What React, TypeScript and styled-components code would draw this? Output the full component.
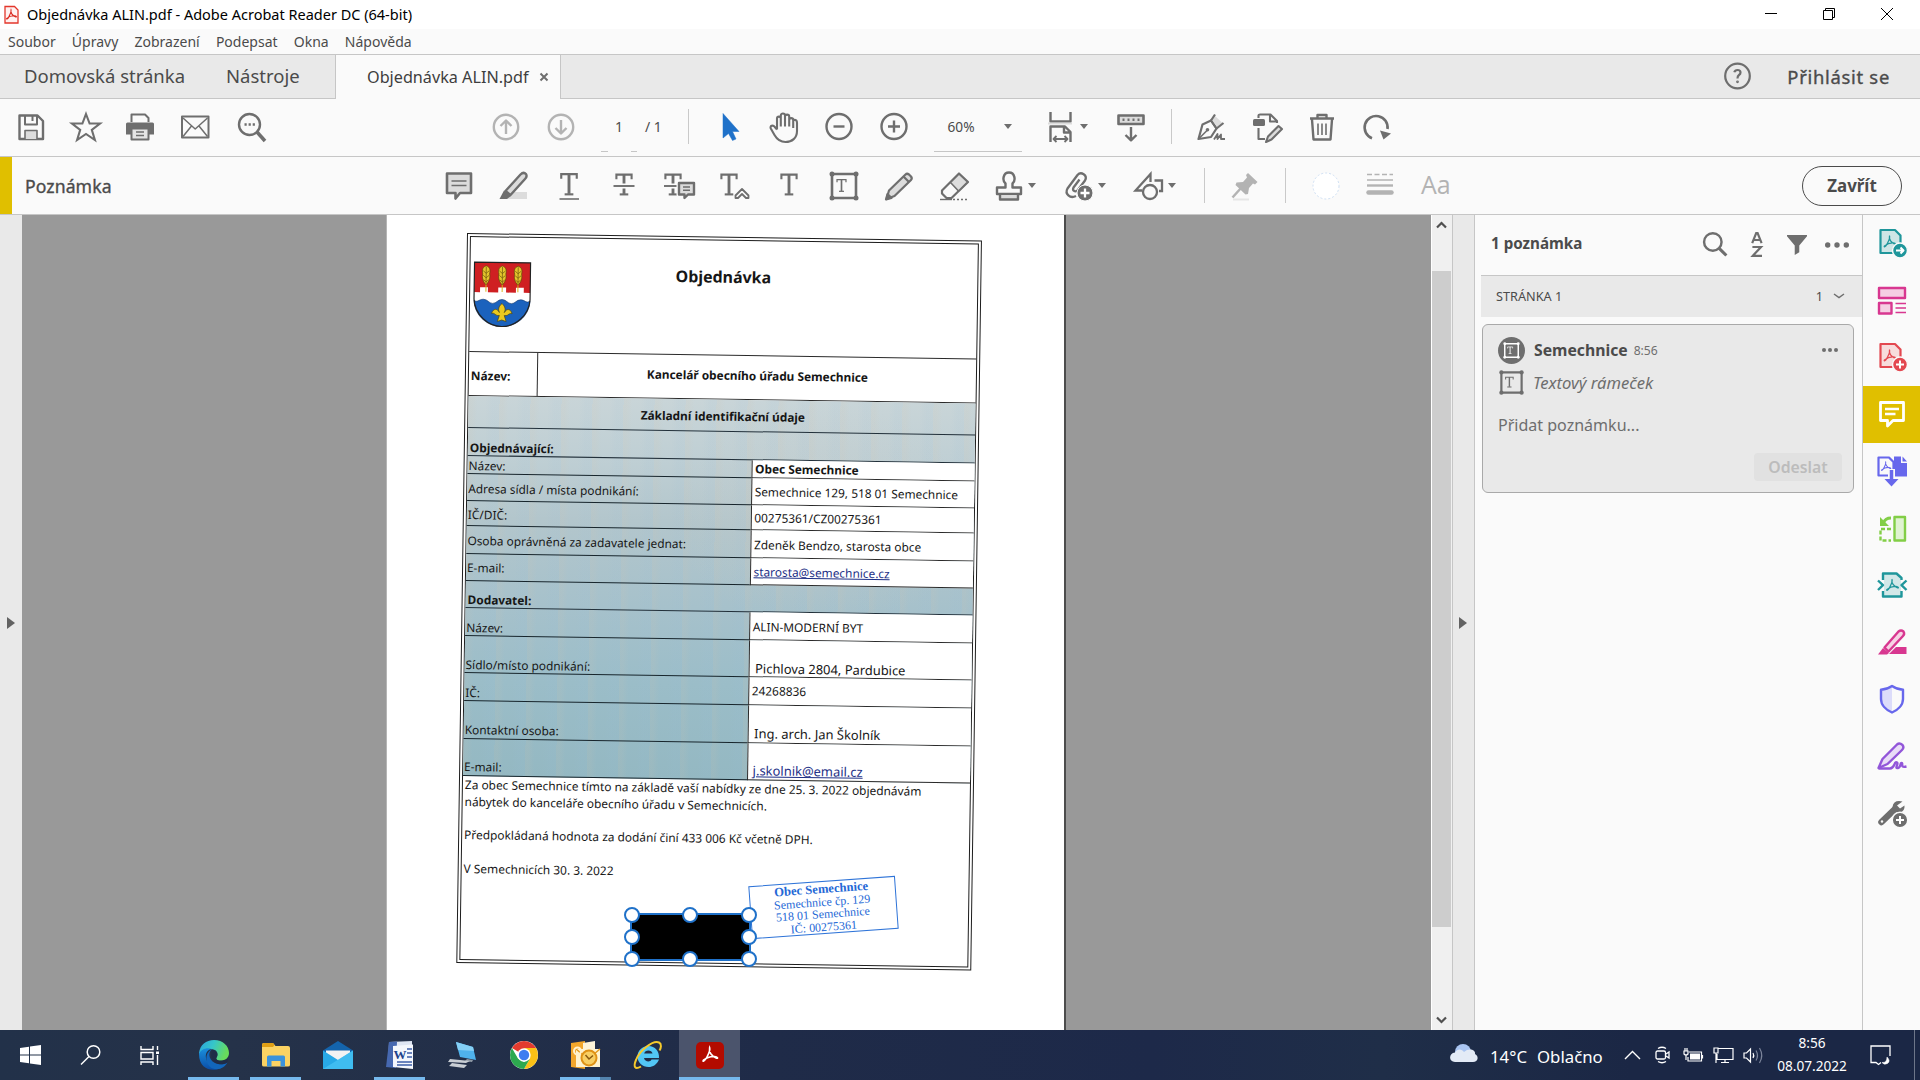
import React from "react";
import styled, { createGlobalStyle } from "styled-components";

const ui = `"Noto Sans", "Open Sans", sans-serif`;
const ink = "#6e6e6e";
const soft = "#b3b3b3";

const GlobalStyle = createGlobalStyle`
  * { box-sizing: border-box; }
  body { margin: 0; background: #fafafa; font-family: ${ui}; overflow: hidden; }
  svg { display: block; flex: none; overflow: visible; }
`;

const Window = styled.div`
  width: 1920px;
  height: 1080px;
  display: flex;
  flex-direction: column;
  background: #fafafa;
  white-space: nowrap;
  color: #4b4b4b;
`;

/* ---------- title, menu and tabs ---------- */

const TitleBar = styled.header`
  height: 29px;
  flex: none;
  display: flex;
  align-items: center;
  background: #fff;
  padding: 0 4px 1px;
`;
const WindowTitle = styled.span`
  margin-left: 8px;
  flex: 1;
  font-size: 14.5px;
  line-height: 27px;
  color: #000;
`;
const WindowButton = styled.span`
  width: 58px;
  display: flex;
  justify-content: center;
`;

const MenuBar = styled.nav`
  height: 26px;
  flex: none;
  display: flex;
  align-items: center;
  gap: 16.2px;
  padding: 0 8px 1px;
  border-bottom: 1px solid #c6c6c6;
  font-size: 14px;
`;

const TabBar = styled.div`
  height: 44px;
  flex: none;
  display: flex;
  align-items: stretch;
  background: #e9e9e9;
  border-bottom: 1px solid #c6c6c6;
`;
const HomeTabs = styled.div`
  width: 335px;
  display: flex;
  align-items: center;
  gap: 41px;
  padding: 0 0 2px 24px;
  font-size: 18.5px;
`;
const ActiveTab = styled.div`
  width: 226px;
  height: 44px;
  display: flex;
  align-items: center;
  gap: 11px;
  padding: 0 0 1px 31px;
  background: #fafafa;
  border: solid #c6c6c6;
  border-width: 0 1px;
  font-size: 16.2px;
  color: #3e3e3e;
`;
const SignIn = styled.div`
  margin-left: auto;
  display: flex;
  align-items: center;
  gap: 36px;
  padding-right: 30px;
  font-size: 18.4px;
  letter-spacing: 0.72px;
  -webkit-text-stroke: 0.35px;
`;

/* ---------- toolbars ---------- */

const Toolbar = styled.div<{ $lift?: number }>`
  height: 58px;
  flex: none;
  display: flex;
  align-items: center;
  padding-bottom: ${(p) => p.$lift ?? 0}px;
  border-bottom: 1px solid #c6c6c6;
`;
const Cell = styled.div<{ $w?: number }>`
  width: ${(p) => p.$w ?? 55}px;
  flex: none;
  display: flex;
  align-items: center;
  justify-content: center;
`;
const Gap = styled.div<{ $w: number }>`
  width: ${(p) => p.$w}px;
  flex: none;
`;
const Divider = styled.div`
  width: 1px;
  height: 35px;
  flex: none;
  background: #c9c9c9;
`;
const PageField = styled.div`
  width: 36px;
  height: 50px;
  display: flex;
  align-items: center;
  justify-content: center;
  font-size: 14px;
  background: linear-gradient(90deg, #c6c6c6 7px, transparent 7px 30px, #c6c6c6 30px) 0 100% / 100% 1px no-repeat;
`;
const PageTotal = styled.span`
  width: 24px;
  margin-left: 8px;
  font-size: 14px;
`;
const ZoomField = styled.div`
  width: 88px;
  height: 50px;
  display: flex;
  align-items: center;
  justify-content: space-between;
  padding: 0 10px 0 14px;
  border-bottom: 1px solid #c6c6c6;
  font-size: 13.7px;
`;
const Caret = styled.i`
  border: 4.5px solid transparent;
  border-top: 5px solid ${ink};
  border-bottom: 0;
  flex: none;
`;
const ToolTitle = styled.div`
  width: 431.5px;
  height: 57px;
  flex: none;
  display: flex;
  align-items: center;
  padding-left: 13px;
  border-left: 12px solid #e0bf00;
  font-size: 17.6px;
  letter-spacing: 0.1px;
  -webkit-text-stroke: 0.35px;
`;
const FontTool = styled.span`
  width: 40px;
  font-family: "Open Sans", sans-serif;
  font-size: 25px;
  line-height: 36px;
  padding-bottom: 3px;
  color: ${soft};
`;
const CloseButton = styled.button`
  width: 100px;
  height: 40px;
  margin: 0 18px 0 auto;
  border: 1.5px solid #4b4b4b;
  border-radius: 20px;
  background: none;
  font: 700 16.9px ${ui};
  color: #4b4b4b;
`;

/* ---------- workspace ---------- */

const Workspace = styled.main`
  flex: 1;
  min-height: 0;
  display: flex;
  overflow: hidden;
`;
const SideHandle = styled.div<{ $dir?: "right" }>`
  width: ${(p) => (p.$dir ? 23 : 22)}px;
  flex: none;
  display: flex;
  align-items: center;
  padding-left: ${(p) => (p.$dir ? 6 : 7)}px;
  background: #e9e9e9;
  border-right: ${(p) => (p.$dir ? "1px solid #c6c6c6" : "0")};
  border-left: ${(p) => (p.$dir ? "1px solid #c6c6c6" : "0")};
`;
const HandleArrow = styled.i`
  border: 6px solid transparent;
  border-left: 8px solid #626262;
  border-right: 0;
`;
const Canvas = styled.div`
  width: 1410px;
  flex: none;
  padding-left: 364px;
  background: #999;
  border-right: 1px solid #fff;
  overflow: hidden;
`;
const Page = styled.article`
  position: relative;
  width: 680px;
  height: 960px;
  padding: 18px 0 0 79.5px;
  background: #fff;
  border-left: 1px solid #b5b5b5;
  border-right: 2px solid #4c4c4c;
`;
const Scrollbar = styled.div`
  width: 20px;
  flex: none;
  display: flex;
  flex-direction: column;
  align-items: center;
  justify-content: space-between;
  padding: 6px 1px 6px 0;
  background: #f0f0f0;
`;
const Thumb = styled.div`
  width: 19px;
  height: 656px;
  margin: 42px 0 auto;
  background: #cdcdcd;
`;

/* ---------- scanned order form ---------- */

const Form = styled.section`
  width: 515px;
  height: 730px;
  display: flex;
  flex-direction: column;
  border: 4px double #1d1d1d;
  transform: rotate(0.84deg);
  transform-origin: 0 0;
  font-size: 11.87px;
  line-height: 16px;
  color: #161616;
`;
const FormHead = styled.div`
  height: 115px;
  flex: none;
  display: grid;
  grid-template-columns: 66px 1fr 66px;
  padding: 24px 2px 0 3px;
  border-bottom: 1px solid #2a2a2a;
`;
const FormTitle = styled.h1`
  margin: 1px 2px 0 0;
  text-align: center;
  font-size: 15.95px;
  line-height: 22px;
`;
const NameRow = styled.div`
  height: 44px;
  flex: none;
  display: grid;
  grid-template-columns: 68px 1fr;
  border-bottom: 1px solid #2a2a2a;
  font-weight: 700;
`;
const NameCell = styled.div<{ $center?: boolean }>`
  display: flex;
  align-items: center;
  justify-content: ${(p) => (p.$center ? "center" : "flex-start")};
  padding: ${(p) => (p.$center ? "0 0 5px 1px" : "2px 0 0 2px")};
  border-left: ${(p) => (p.$center ? "1px solid #2a2a2a" : "0")};
`;
const Tinted = styled.div`
  flex: none;
  background:
    repeating-linear-gradient(90deg, rgba(214, 196, 170, 0.1) 0 3px, rgba(255, 255, 255, 0) 9px 17px, rgba(150, 190, 220, 0.08) 24px 31px),
    radial-gradient(ellipse at 70% 30%, rgba(210, 205, 195, 0.3), transparent 30%),
    linear-gradient(#c9d5d8 0, #bfcfd4 16%, #b3c6cc 32%, #a6c1cb 55%, #9bbdc8 75%, #94b8c2);
`;
const Band = styled.div<{ $h: number; $center?: boolean }>`
  height: ${(p) => p.$h}px;
  display: flex;
  align-items: ${(p) => (p.$center ? "center" : "flex-end")};
  justify-content: ${(p) => (p.$center ? "center" : "flex-start")};
  padding-left: 2px;
  border-bottom: 1px solid #22303a;
  font-weight: 700;
`;
const FormRow = styled.div<{ $h: number }>`
  height: ${(p) => p.$h}px;
  display: grid;
  grid-template-columns: 283.5px 1fr;
`;
const Label = styled.div<{ $lift: number }>`
  display: flex;
  align-items: flex-end;
  padding-left: 1px;
  border-bottom: 1px solid #17252c;
  > span { margin-bottom: ${(p) => p.$lift}px; }
`;
const Value = styled.div<{ $lift: number; $size?: number; $bold?: boolean; $indent?: number }>`
  display: flex;
  align-items: flex-end;
  padding-left: ${(p) => p.$indent ?? 3}px;
  background: #fff;
  border-left: 1px solid #2a2a2a;
  border-bottom: 1px solid #2a2a2a;
  font-size: ${(p) => p.$size ?? 11.87}px;
  font-weight: ${(p) => (p.$bold ? 700 : 400)};
  > * { margin-bottom: ${(p) => p.$lift}px; }
`;
const Mail = styled.a`
  color: #1d2f86;
  text-decoration: underline;
`;
const Body = styled.div`
  padding: 0 0 0 2px;
  font-size: 11.9px;
  line-height: 16.7px;
  white-space: pre;
`;
const Stamp = styled.div`
  position: absolute;
  left: 363px;
  top: 666px;
  width: 147px;
  height: 53px;
  padding: 1px 2px 0 0;
  border: 1px solid #2f74d8;
  transform: rotate(-4.1deg);
  text-align: center;
  font-family: "Liberation Serif", serif;
  font-size: 12px;
  line-height: 12.6px;
  color: #2468d6;
  b { font-size: 12.6px; }
`;
const Redaction = styled.div`
  position: absolute;
  left: 242.5px;
  top: 698px;
  width: 121px;
  height: 48px;
  border: 2px solid #1f71c9;
  background: #000;
`;
const Handle = styled.i<{ $x: number; $y: number }>`
  position: absolute;
  left: ${(p) => p.$x * 50}%;
  top: ${(p) => p.$y * 50}%;
  width: 16px;
  height: 16px;
  margin: -8px;
  border: 2px solid #1f71c9;
  border-radius: 50%;
  background: #fff;
`;

/* ---------- comments panel ---------- */

const Panel = styled.aside`
  width: 388px;
  flex: none;
  padding-left: 6px;
  border-right: 1px solid #c6c6c6;
`;
const PanelHead = styled.div`
  height: 61px;
  display: flex;
  align-items: center;
  padding: 0 5px 1px 10px;
  border-bottom: 1px solid #c6c6c6;
`;
const PanelTitle = styled.b`
  flex: 1;
  font-size: 15.2px;
  padding-bottom: 4px;
`;
const PanelTool = styled.div<{ $w: number }>`
  width: ${(p) => p.$w}px;
  display: flex;
  justify-content: center;
`;
const GroupRow = styled.div`
  height: 41px;
  display: flex;
  align-items: center;
  padding: 0 17px 1px 15px;
  background: #e9e9e9;
  font-size: 12.7px;
  > span:first-child { flex: 1; }
`;
const NoteCard = styled.div`
  width: 372px;
  height: 169px;
  margin: 7px 0 0 1px;
  padding: 10px 11px 0 15px;
  border: 1px solid #a9a9a9;
  border-radius: 6px;
  background: #e9e9e9;
`;
const NoteHead = styled.div`
  height: 30px;
  display: flex;
  align-items: center;
  b { margin-left: 9px; font-size: 15.75px; }
  time { margin: 1px auto 0 6px; font-size: 12.1px; color: ${ink}; }
`;
const NoteType = styled.div`
  height: 38px;
  display: flex;
  align-items: center;
  gap: 8px;
  padding-bottom: 3px;
  font-size: 16.6px;
  font-style: italic;
  color: ${ink};
`;
const NoteInput = styled.div`
  height: 50px;
  line-height: 44px;
  font-size: 16.05px;
  color: ${ink};
`;
const SendButton = styled.button`
  display: block;
  width: 88px;
  height: 28px;
  margin-left: auto;
  border: 0;
  border-radius: 4px;
  background: #e1e1e1;
  font: 600 15.8px/26px ${ui};
  color: #bcbcbc;
`;
const Rail = styled.aside`
  flex: 1;
`;
const RailItem = styled.div<{ $on?: boolean }>`
  height: 57px;
  display: flex;
  align-items: center;
  justify-content: center;
  padding-bottom: 2px;
  background: ${(p) => (p.$on ? "#e0bf00" : "transparent")};
`;

/* ---------- taskbar ---------- */

const Taskbar = styled.footer`
  height: 50px;
  flex: none;
  display: flex;
  align-items: stretch;
  background: linear-gradient(90deg, #223149, #253249 12%, #1f2b48 40%, #1d2949 60%, #1f2e48 72%, #1b2745 85%);
  color: #fff;
`;
const TaskItem = styled.div<{ $w?: number; $state?: "open" | "many" | "active" }>`
  width: ${(p) => p.$w ?? 62}px;
  display: flex;
  align-items: center;
  justify-content: center;
  background: ${(p) =>
    p.$state === "active"
      ? "linear-gradient(#76b9ed,#76b9ed) 0 100% / 100% 3px no-repeat #4b546c"
      : p.$state === "open"
      ? "linear-gradient(#76b9ed,#76b9ed) 5px 100% / 51px 3px no-repeat"
      : p.$state === "many"
      ? "linear-gradient(90deg,#76b9ed 40px,#5383ad 40px) 5px 100% / 51px 3px no-repeat"
      : "none"};
`;
const Tray = styled.div`
  margin-left: auto;
  width: 470px;
  display: flex;
  align-items: center;
`;
const Weather = styled.div`
  width: 134px;
  margin-left: 12px;
  display: flex;
  gap: 10px;
  padding-top: 3px;
  font-size: 16.8px;
`;
const TrayIcon = styled.div`
  width: 30px;
  flex: none;
  display: flex;
  justify-content: center;
`;
const Clock = styled.div`
  width: 88px;
  text-align: center;
  font-size: 13.65px;
  line-height: 23px;
  padding-bottom: 2px;
`;
const DesktopEdge = styled.div`
  width: 1px;
  height: 50px;
  margin: 0 5px 0 auto;
  background: #6d7689;
`;

/* ---------- icons ---------- */

type IcoProps = { c?: string; s?: number; w?: number; children: React.ReactNode };
const Ico = ({ c = ink, s = 32, w = 2.4, children }: IcoProps) => (
  <svg width={s} height={s} viewBox="0 0 32 32" fill="none" stroke={c} strokeWidth={w} strokeLinejoin="round">
    {children}
  </svg>
);

/* a serifed text mark: bar with end ticks, stem and foot */
const TMark = ({ x = 16, y = 4, k = 1 }: { x?: number; y?: number; k?: number }) => (
  <g transform={`translate(${x} ${y}) scale(${k})`} strokeLinejoin="miter" strokeWidth="2.2">
    <path d="M-8 6V1.2H8V6" />
    <path d="M0 1V21.5" strokeWidth="3" />
    <path d="M-4.5 22H4.5" />
  </g>
);

const CircleArrow = ({ up }: { up?: boolean }) => (
  <Ico c={soft}>
    <circle cx="16" cy="16" r="12.2" />
    <g transform={up ? "" : "rotate(180 16 16)"}>
      <path d="M16 23V10M10.5 15L16 9.5L21.5 15" />
    </g>
  </Ico>
);

const PdfMark = ({ c, x = 0, y = 0, k = 1, w = 1.3 }: { c: string; x?: number; y?: number; k?: number; w?: number }) => (
  <path
    transform={`translate(${x} ${y}) scale(${k})`}
    d="M6.5 1C5.5 4.500 8.500 8 12 9.300C13.500 9.900 13 8.300 10.500 8C7 7.700 4 9 1.500 11C.5 12.300 2.500 12.200 4 9C5.500 6 7.300 3.500 6.500 1Z"
    stroke={c}
    strokeWidth={w}
    fill="none"
  />
);

const FrameIcon = ({ c = ink, s = 32 }: { c?: string; s?: number }) => (
  <Ico c={c} s={s} w={2.6}>
    <path d="M4 4H28V28H4Z" />
    <g fill={c} stroke="none">
      <circle cx="4" cy="4" r="2.5" /><circle cx="28" cy="4" r="2.5" /><circle cx="4" cy="28" r="2.5" /><circle cx="28" cy="28" r="2.5" />
    </g>
    <TMark x={13.5} y={9} k={0.56} />
  </Ico>
);

const SortIcon = () => (
  <svg width="12" height="25" viewBox="0 0 12 25" fill="none" stroke={ink} strokeWidth="2.2">
    <path d="M1.200 11.200L5.200 1.200H6.600L10.600 11.200M2.600 8H9.200" />
    <path d="M1.400 15H10L1.800 23.800H11" />
  </svg>
);

const Dots = ({ w, r }: { w: number; r: number }) => (
  <svg width={w} height="8" viewBox={`0 0 ${w} 8`} fill={ink}>
    <circle cx={r} cy="4" r={r} /><circle cx={w / 2} cy="4" r={r} /><circle cx={w - r} cy="4" r={r} />
  </svg>
);

const DocBadge = ({ c, tint, plus }: { c: string; tint: string; plus?: boolean }) => (
  <Ico c={c} w={2.2}>
    <path d="M4.500 3H19L24.500 8.500V26H4.500Z" fill={tint} />
    <PdfMark c={c} x={7} y={8} k={1} />
    <circle cx="24" cy="23.500" r="7.500" fill={c} stroke="#fafafa" strokeWidth="1.500" />
    <path d={plus ? "M24 19.500V27.500M20 23.500H28" : "M20 23.500H27M24.500 20.500L27.500 23.500L24.500 26.500"} stroke="#fff" strokeWidth="2" />
  </Ico>
);

const MainToolbar = () => (
  <Toolbar $lift={1.5}>
    <Gap $w={3} />
    <Cell>
      <Ico>
        <path d="M4.500 4.500H22.500L28 10V28H4.500Z" />
        <path d="M10 5V13.500H22V5M17.500 5V10" strokeWidth="2" />
        <path d="M10 28V19.500H22V28" strokeWidth="1.600" fill="#dcdcdc" />
      </Ico>
    </Cell>
    <Cell>
      <Ico w={2.1}><path d="M16 3L19.600 12.500H30L21.800 18.800L24.900 29L16 23L7.100 29L10.200 18.800L2 12.500H12.400Z" strokeLinejoin="miter" /></Ico>
    </Cell>
    <Cell $w={54}>
      <Ico>
        <path d="M7.500 11V3.500H21L24.500 7V11" strokeWidth="2" />
        <path d="M3.500 11.500H28.500Q30 11.500 30 13V23.500H2V13Q2 11.500 3.500 11.500Z" fill={ink} stroke="none" />
        <path d="M7.500 17.500H24.500V28.500H7.500Z" fill="#e4e4e4" strokeWidth="2" />
        <path d="M12 21H20M12 24.500H20" strokeWidth="1.300" />
      </Ico>
    </Cell>
    <Cell $w={56}>
      <Ico w={2}><path d="M3 5.500H29.500V26.500H3Z" /><path d="M4 7L16.200 18L28.500 7M4 25.500L12.500 15M28.500 25.500L20 15" strokeWidth="1.500" /></Ico>
    </Cell>
    <Cell>
      <Ico>
        <circle cx="14.500" cy="13.500" r="10.500" />
        <path d="M22 21L30 30" strokeWidth="3.500" />
        <path d="M9.500 13.500H20" strokeWidth="2.400" strokeDasharray="2.200 1.900" />
      </Ico>
    </Cell>
    <Gap $w={200.5} />
    <Cell><CircleArrow up /></Cell>
    <Cell><CircleArrow /></Cell>
    <Gap $w={12.5} />
    <PageField>1</PageField>
    <PageTotal>/ 1</PageTotal>
    <Gap $w={19} />
    <Divider />
    <Gap $w={13} />
    <Cell><Ico><path d="M9 2.500V27L14.500 22.500L18.500 29.500L22 28L18.500 20.500H25Z" fill="#1f71c9" stroke="#1f71c9" strokeWidth="0.500" /></Ico></Cell>
    <Cell $w={54}>
      <Ico w={2.1}>
        <path d="M9 18.500V7.500C9 5 12.800 5 12.800 7.500V4.500C12.800 1.800 17 1.800 17 4.500V5.500C17 3 21.200 3 21.200 5.500V9C21.200 6.500 25.200 6.500 25.200 9C28.500 8.500 29 10 29 12V20C29 27 24 31 17.500 31C11 31 8.500 27.500 6.500 24L2.800 17.500C1.500 14.800 5 13.500 6.800 16L9 18.500M12.800 7V15.500M17 5V15.500M21.200 8V15.500M25.200 9V17" />
      </Ico>
    </Cell>
    <Cell><Ico><circle cx="16" cy="15.500" r="12.500" /><path d="M10.500 15.500H21.500" /></Ico></Cell>
    <Cell><Ico><circle cx="16" cy="15.500" r="12.500" /><path d="M10 15.500H22M16 9.500V21.500" /></Ico></Cell>
    <Gap $w={12.5} />
    <ZoomField>60%<Caret /></ZoomField>
    <Gap $w={22.500} />
    <Cell $w={32}>
      <Ico>
        <path d="M6.500 1V10.500H26.500V1" />
        <path d="M4 12.500H28" stroke="#dcdcdc" strokeWidth="2" />
        <path d="M6.500 31V15.500H21L26.500 21V31M20 16V21.500H26" />
        <path d="M9.500 28H23.500M12.500 25L9.500 28L12.500 31M20.500 25L23.500 28L20.500 31" strokeWidth="1.800" />
      </Ico>
    </Cell>
    <Cell $w={16}><Caret /></Cell>
    <Gap $w={11} />
    <Cell>
      <Ico>
        <path d="M3.500 4.500H28.500V13H3.500Z" fill="#dcdcdc" strokeWidth="2.600" />
        <path d="M7.500 8.700H25" strokeWidth="2.600" strokeDasharray="2 3" />
        <path d="M16 16V29M10.500 24L16 29.300L21.500 24" />
      </Ico>
    </Cell>
    <Gap $w={12.500} />
    <Divider />
    <Gap $w={12.500} />
    <Cell>
      <Ico w={2.2}>
        <path d="M2.500 28L6.500 13.500L15 9.500L20.500 17.500L15 26Z" />
        <path d="M3 27.500L11 19.500" strokeWidth="1.600" /><circle cx="11.500" cy="18.800" r="1.800" fill={ink} stroke="none" />
        <path d="M18 4L26.500 12L21 16L15.500 8.500Z" fill="#dcdcdc" stroke="none" />
        <path d="M19 3.500L15 9.500L20.500 17.500L27.500 12" />
        <path d="M18 28.500L21.500 23V28L25 23.500V28H29" strokeWidth="1.800" />
      </Ico>
    </Cell>
    <Cell>
      <Ico w={2.1}>
        <path d="M7.500 7V4.500Q7.500 3.500 9 3.500H19.500L26 10V12M19 4V10.500H25.500M7.500 17V28H14" />
        <rect x="2" y="8" width="12" height="7" rx="1.500" fill={ink} stroke="none" />
        <path d="M15 31L17 25.500L27.500 15L31 18L20.500 28.500Z" fill="#dcdcdc" />
      </Ico>
    </Cell>
    <Cell>
      <Ico>
        <path d="M4 7.500H28M11.500 7V4H20.500V7M6 8.500L7.500 28.500H24.500L26 8.500" />
        <path d="M12 12.500V24M16 12.500V24M20 12.500V24" strokeWidth="1.600" />
      </Ico>
    </Cell>
    <Cell $w={53}>
      <Ico w={2.6}>
        <path d="M12 27.200A11.500 11.500 0 1 1 27.500 18" />
        <path d="M20 19.500L31 22.500L23.500 28.500Z" fill={ink} stroke="none" />
      </Ico>
    </Cell>
  </Toolbar>
);

const CommentToolbar = () => (
  <Toolbar>
    <ToolTitle>Poznámka</ToolTitle>
    <Cell>
      <Ico><path d="M4 3.500H28V23H17L12.500 28.500V23H4Z" fill="#dcdcdc" strokeWidth="2.600" /><path d="M8.500 11H23.500M8.500 15.500H23.500" strokeWidth="1.500" /></Ico>
    </Cell>
    <Cell>
      <Ico>
        <path d="M8 29L16 22H29V29Z" fill="#dcdcdc" stroke="none" />
        <path d="M7.500 21L22.500 4.500Q25.500 1.500 28 4Q29.500 6.500 27 9L12.500 25Z" fill="#dcdcdc" />
        <path d="M6 20.500L13 26L9 29H1.500Z" fill={ink} stroke="none" />
      </Ico>
    </Cell>
    <Cell><Ico><TMark y={3} k={0.97} /><path d="M6.500 29H26" strokeWidth="1.600" /></Ico></Cell>
    <Cell><Ico><TMark y={3.500} k={0.95} /><path d="M5.500 16H26.500" stroke="#fafafa" strokeWidth="5" /><path d="M5.500 16H26.500" strokeWidth="1.900" /></Ico></Cell>
    <Cell>
      <Ico><TMark x={10} y={3.500} k={0.95} /><path d="M1 16H16" stroke="#fafafa" strokeWidth="5" /><path d="M1 16H16" strokeWidth="1.900" />
        <path d="M16 13H31V24.500H25L21.500 28V24.500H16Z" fill="#dcdcdc" stroke="#fafafa" strokeWidth="5" />
        <path d="M16 13H31V24.500H25L21.500 28V24.500H16Z" fill="#dcdcdc" /><path d="M20 17H27M20 20.300H27" strokeWidth="1.400" /></Ico>
    </Cell>
    <Cell>
      <Ico><TMark x={11} y={3.500} k={0.95} />
        <path d="M17.500 28V25.500L24 19L30.500 25.500V28H28L24 24L20 28Z" fill="#fafafa" strokeWidth="1.800" />
      </Ico>
    </Cell>
    <Cell><Ico><TMark y={3.500} k={0.95} /></Ico></Cell>
    <Cell><FrameIcon /></Cell>
    <Cell>
      <Ico w={2.2}><path d="M3.500 29L6 20.500L22.500 4.500Q24 3 26 4.500L28 6.500Q29.500 8.500 28 10L11.500 26Z" fill="#dcdcdc" /><path d="M20.500 6.500L26 12" /><path d="M3 29.500L4.500 24L8.500 28Z" fill={ink} /></Ico>
    </Cell>
    <Cell>
      <Ico w={2.2}>
        <path d="M2 29.500H14" strokeWidth="1.400" /><path d="M15 29.500H29" strokeWidth="1.400" strokeDasharray="2 2" />
        <path d="M4 20.500L21 3.500L30 12L13.500 28H8.500L4 23.500Z" fill="#fafafa" />
        <path d="M12.500 12.500L21 4L29.500 12L20.500 21Z" fill="#dcdcdc" strokeWidth="1.600" />
      </Ico>
    </Cell>
    <Gap $w={1.5} />
    <Cell $w={57}>
      <Gap $w={5} />
      <Ico>
        <path d="M12.500 17.500V13.500C9 10.500 10 2.500 16 2.500C22 2.500 23 10.500 19.500 13.500V17.500H28V24H4V17.500Z" />
        <path d="M7 25V29.500H25V25" fill="#dcdcdc" />
      </Ico>
      <Gap $w={3} /><Caret />
    </Cell>
    <Gap $w={13.500} />
    <Cell $w={57}>
      <Gap $w={5} />
      <Ico w={2.3}>
        <path d="M13 26C7 29 1.500 24 4.500 18.500L14.500 5C18 1 25 5 22 10.500L14.500 20.500C12 22.500 9 20.500 10.500 17.500L16.500 9.500" />
        <circle cx="22" cy="23" r="8" fill={ink} stroke="#fafafa" strokeWidth="1" /><path d="M22 18.500V27.500M17.500 23H26.500" stroke="#fff" />
      </Ico>
      <Gap $w={3} /><Caret />
    </Cell>
    <Gap $w={13} />
    <Cell $w={57}>
      <Gap $w={5} />
      <Ico w={2.3}>
        <path d="M17.500 12V4L2.500 20.500H9M21.500 10.500H29V21H26" strokeLinejoin="miter" />
        <circle cx="17" cy="22" r="7" fill="#fafafa" />
      </Ico>
      <Gap $w={3} /><Caret />
    </Cell>
    <Gap $w={23.500} />
    <Divider />
    <Gap $w={24} />
    <Cell $w={32}>
      <Ico c={soft}>
        <path d="M4 29.500H20" stroke="#e6e6e6" strokeWidth="2" />
        <path d="M3.500 27.500L12 18" strokeWidth="2.500" />
        <path d="M19 3L28.500 12L26 14.500L24 13.500L20 18L19 24L16.500 24.500L6.500 15L7.500 12.500L14 12L18 7.500L17 5Z" fill={soft} stroke="none" />
      </Ico>
    </Cell>
    <Gap $w={24} />
    <Divider />
    <Gap $w={24} />
    <Cell $w={32}><Ico><circle cx="16" cy="16" r="13" fill="#fff" stroke="#cfe0f4" strokeWidth="1" strokeDasharray="2 2" /></Ico></Cell>
    <Gap $w={22} />
    <Cell $w={32}>
      <Ico c={soft} w={1.5}>
        <path d="M3 4.500H29" strokeDasharray="5 2.500" /><path d="M3 10H29" strokeWidth="1.500" /><path d="M3 15.500H29" strokeWidth="2.400" /><path d="M4.500 22.500H27.500" strokeWidth="4.500" strokeLinecap="round" />
      </Ico>
    </Cell>
    <Gap $w={25} />
    <FontTool>Aa</FontTool>
    <CloseButton>Zavřít</CloseButton>
  </Toolbar>
);

const Ear = ({ x }: { x: number }) => (
  <g transform={`translate(${x} 4.500)`}>
    <path d="M0 17V26" stroke="#d9b21a" strokeWidth="1" />
    <path d="M0 0C3.500 1 4.500 4 3.500 8C4.500 12 3 16 0 19C-3 16-4.500 12-3.500 8C-4.500 4-3.500 1 0 0Z" fill="#e4c52c" stroke="#5d4a08" strokeWidth="0.700" />
    <path d="M-3 5L0 7.500L3 5M-3 9.500L0 12L3 9.500M-2.500 14L0 16L2.500 14M0 1V18" stroke="#6a540a" strokeWidth="0.700" fill="none" />
  </g>
);

const Crest = () => (
  <svg width="58" height="66" viewBox="0 0 59 66" fill="none" preserveAspectRatio="none">
    <path d="M1 1H58V38C57 54 43 65 29.500 65C16 65 2 54 1 38Z" fill="#fff" />
    <path d="M1 1H58V31H51.500V26H43.500V31H33.500V26H25.500V31H15V26H7V31H1Z" fill="#cf1f22" />
    <path d="M1 39C4 42 6 38 10.500 38C15 38 16 42 20 42C24 42 25 38 29.500 38C34 38 35 42 39 42C43 42 44 38 48.500 38C53 38 54 42 58 39C57 56 43 65 29.500 65C16 65 2 56 1 39Z" fill="#1b62bd" stroke="#12386c" strokeWidth="0.600" />
    <Ear x={13} /><Ear x={29.5} /><Ear x={45.5} />
    <path d="M29.500 42C33 45 33.500 48 32 51C34 47 38 46.500 40 52C37 51 36 54 34 54H32L34 60L29.500 58.500L25 60L27 54H25C23 54 22 51 19 52C21 46.500 25 47 27 51C25.500 48 26 45 29.500 42Z" fill="#ecc91f" stroke="#4b4410" strokeWidth="0.700" />
    <path d="M1 1H58V38C57 54 43 65 29.500 65C16 65 2 54 1 38Z" stroke="#222" strokeWidth="1.200" />
  </svg>
);

type Field = { h: number; label: string; value: string; ll: number; vl: number; bold?: boolean; size?: number; indent?: number; link?: boolean };

const customer: Field[] = [
  { h: 18, label: "Název:", value: "Obec Semechnice", ll: 0, vl: 0.6, bold: true },
  { h: 27, label: "Adresa sídla / místa podnikání:", value: "Semechnice 129, 518 01 Semechnice", ll: 4.4, vl: 5 },
  { h: 25, label: "IČ/DIČ:", value: "00275361/CZ00275361", ll: 3.2, vl: 3.6 },
  { h: 28, label: "Osoba oprávněná za zadavatele jednat:", value: "Zdeněk Bendzo, starosta obce", ll: 5.2, vl: 5.4 },
  { h: 27, label: "E-mail:", value: "starosta@semechnice.cz", ll: 4.6, vl: 4.8, link: true },
];
const supplier: Field[] = [
  { h: 28, label: "Název:", value: "ALIN-MODERNÍ BYT", ll: 0.2, vl: 5.4 },
  { h: 37, label: "Sídlo/místo podnikání:", value: "Pichlova 2804, Pardubice", ll: 0.2, vl: -0.2, size: 12.9, indent: 6 },
  { h: 28, label: "IČ:", value: "24268836", ll: 0.2, vl: 6 },
  { h: 38, label: "Kontaktní osoba:", value: "Ing. arch. Jan Školník", ll: 1.2, vl: 1, size: 12.95, indent: 6 },
  { h: 37, label: "E-mail:", value: "j.skolnik@email.cz", ll: 1, vl: 0.6, size: 12.95, indent: 5, link: true },
];
const Fields = ({ rows }: { rows: Field[] }) => (
  <>
    {rows.map((r) => (
      <FormRow key={r.label} $h={r.h}>
        <Label $lift={r.ll}><span>{r.label}</span></Label>
        <Value $lift={r.vl} $size={r.size} $bold={r.bold} $indent={r.indent}>
          {r.link ? <Mail>{r.value}</Mail> : <span>{r.value}</span>}
        </Value>
      </FormRow>
    ))}
  </>
);

const OrderPage = () => (
  <Page>
    <Form>
      <FormHead><Crest /><FormTitle>Objednávka</FormTitle></FormHead>
      <NameRow>
        <NameCell>Název:</NameCell>
        <NameCell $center>Kancelář obecního úřadu Semechnice</NameCell>
      </NameRow>
      <Tinted>
        <Band $h={32} $center>Základní identifikační údaje</Band>
        <Band $h={28}>Objednávající:</Band>
        <Fields rows={customer} />
        <Band $h={27}>Dodavatel:</Band>
        <Fields rows={supplier} />
      </Tinted>
      <Body>{`Za obec Semechnice tímto na základě vaší nabídky ze dne 25. 3. 2022 objednávám
nábytek do kanceláře obecního úřadu v Semechnicích.

Předpokládaná hodnota za dodání činí 433 006 Kč včetně DPH.

V Semechnicích 30. 3. 2022`}</Body>
    </Form>
    <Stamp>
      <b>Obec Semechnice</b><br />Semechnice čp. 129<br />518 01 Semechnice<br />IČ: 00275361
    </Stamp>
    <Redaction>
      {[0, 1, 2].flatMap((y) => [0, 1, 2].filter((x) => x !== 1 || y !== 1).map((x) => <Handle key={`${x}${y}`} $x={x} $y={y} />))}
    </Redaction>
  </Page>
);

const Comments = () => (
  <Panel>
    <PanelHead>
      <PanelTitle>1 poznámka</PanelTitle>
      <PanelTool $w={44}><Ico s={28} w={2.8}><circle cx="13.500" cy="12.500" r="10" /><path d="M20.500 19.500L29 28" strokeWidth="3.500" /></Ico></PanelTool>
      <PanelTool $w={40}><SortIcon /></PanelTool>
      <PanelTool $w={40}><svg width="22" height="20" viewBox="0 0 22 22" fill={ink}><path d="M0 0H22V1.500L13.500 11.500V19L8.500 22V11.500L0 1.500Z" /></svg></PanelTool>
      <PanelTool $w={40}><Dots w={24} r={2.7} /></PanelTool>
    </PanelHead>
    <GroupRow>
      <span>STRÁNKA 1</span><span>1</span><Gap $w={10} />
      <svg width="12" height="6" viewBox="0 0 12 6" fill="none" stroke={ink} strokeWidth="1.500"><path d="M1 1L6 4.500L11 1" /></svg>
    </GroupRow>
    <NoteCard>
      <NoteHead>
        <svg width="27" height="27" viewBox="0 0 27 27"><circle cx="13.500" cy="13.500" r="13.500" fill={ink} />
          <g transform="translate(4.500 4.500)"><FrameIcon c="#fff" s={18} /></g>
        </svg>
        <b>Semechnice</b><time>8:56</time><Dots w={16} r={2} /><Gap $w={4} />
      </NoteHead>
      <NoteType><FrameIcon s={27} />Textový rámeček</NoteType>
      <NoteInput>Přidat poznámku...</NoteInput>
      <SendButton>Odeslat</SendButton>
    </NoteCard>
  </Panel>
);

const teal = "#1f969b", pink = "#d83790", red = "#e34850", violet = "#6767ec", green = "#82ce46", purple = "#9256d9";

const ToolRail = () => (
  <Rail>
    <RailItem><DocBadge c={teal} tint="#cfe6e6" /></RailItem>
    <RailItem>
      <Ico c={pink}><path d="M3 4H29V14H3ZM3 19H15.500V29.500H3Z" fill="#f5cfe3" /><path d="M19.500 19.500H30M19.500 24H30M19.500 28.500H30" strokeWidth="1.500" /></Ico>
    </RailItem>
    <RailItem><DocBadge c={red} tint="#f7dcdc" plus /></RailItem>
    <RailItem $on>
      <Ico c="#fff" w={2.8}><path d="M4.500 4.500H27.500V22.500H17L11.500 28V22.500H4.500Z" /><path d="M9 11H23M9 16H19.500" strokeWidth="2.300" /></Ico>
    </RailItem>
    <RailItem>
      <Ico c={violet} w={2.2}>
        <path d="M18 1.500H25V8H31V21.500H18Z" fill={violet} stroke="none" /><path d="M26.500 1.500V6.500H31Z" fill={violet} stroke="none" />
        <path d="M2.500 2.500H13L17.500 7V20.500H2.500Z" fill="#fafafa" />
        <PdfMark c={violet} x={4.5} y={6} k={0.8} />
        <path d="M15.500 14V24" stroke="#fafafa" strokeWidth="7" /><path d="M15.500 15V25" strokeWidth="3.500" /><path d="M8.500 24H22.500L15.500 31.500Z" fill={violet} stroke="none" />
      </Ico>
    </RailItem>
    <RailItem>
      <Ico c={green}>
        <path d="M18.500 5H29V28.500H18.500Z" fill="#e0f3d2" /><path d="M15 17H4.500V28.500H15" strokeDasharray="4 2" />
        <path d="M15 6C11 6 8.500 8 7.500 11" strokeWidth="2.800" /><path d="M4 5V14H13Z" fill={green} stroke="none" />
      </Ico>
    </RailItem>
    <RailItem>
      <Ico c={teal}>
        <path d="M8 5H20L25 9V27H8Z" fill="#d2e8e8" stroke="none" />
        <path d="M7 11V4.500H20.500L25.500 9V11M25.500 22V27.500H7V22M2 11.500L7 16.200L2 21M30.500 11.500L25.500 16.200L30.500 21" />
        <PdfMark c={teal} x={9.5} y={9.5} />
      </Ico>
    </RailItem>
    <RailItem>
      <Ico c={pink}>
        <path d="M13 28L20 21H30.500V28Z" fill={pink} stroke="none" />
        <path d="M8.500 21.500L22.500 5.500Q25 3.500 27.500 5.500Q29 8 27 10L12.500 25.500Z" fill="#f7d3e5" />
        <path d="M7 22L13 27L11 28.500H2Z" fill={pink} stroke="none" />
      </Ico>
    </RailItem>
    <RailItem>
      <Ico c={violet}><path d="M16 3.500C12 6.500 9 7 5 7V16C5 22 10 27 16 29.500Z" fill="#dcdcfa" stroke="none" /><path d="M16 3C12.500 5.500 9 6.500 5 6.800V16C5 22 10 27 16 29.500C22 27 27 22 27 16V6.800C23 6.500 19.500 5.500 16 3Z" /></Ico>
    </RailItem>
    <RailItem>
      <Ico c={purple}><path d="M2.500 28L6.500 19L21 4.500Q23.500 2.500 26.500 5Q28.500 7.500 26 10L11.500 24Z" fill="#e9dcf7" /><path d="M2.500 28.500H14C19 28.500 18 21 21 22.500C23 24 18 28.500 22 28C25 27.500 24 22 26 23C27 24 24 28 30.500 26.500" /></Ico>
    </RailItem>
    <RailItem>
      <Ico>
        <path d="M5.500 25L19 12" strokeWidth="6.500" strokeLinecap="round" /><circle cx="6" cy="24.500" r="1.200" fill="#fafafa" stroke="none" />
        <path d="M26.500 4.500L21 8.500L24 11.500L28.500 8.500Q29 14 24 15.500Q17.500 16.500 16.500 10Q17.500 2.500 26.500 4.500Z" fill={ink} stroke="none" />
        <circle cx="24" cy="23" r="7.800" fill={ink} stroke="#fafafa" strokeWidth="1.500" /><path d="M24 19V27M20 23H28" stroke="#fff" strokeWidth="2" />
      </Ico>
    </RailItem>
  </Rail>
);

const Apps = () => (
  <>
    <TaskItem $w={60}><svg width="21" height="20" viewBox="0 0 21 20" fill="#fff"><path d="M0 3L9 1.700V9.500H0ZM10 1.500L21 0V9.500H10ZM0 10.500H9V18.300L0 17ZM10 10.500H21V20L10 18.500Z" /></svg></TaskItem>
    <TaskItem $w={60}><svg width="21" height="20" viewBox="0 0 21 20" fill="none" stroke="#fff" strokeWidth="1.500"><circle cx="13.500" cy="7" r="6.300" /><path d="M9 11.500L1 19.500" /></svg></TaskItem>
    <TaskItem $w={60}><svg width="20" height="19" viewBox="0 0 20 19" fill="none" stroke="#fff" strokeWidth="1.400"><path d="M1 0V3.500H13V0M1 6.500H13V13H1ZM1 19V16H13V19M17.500 0V4M17.500 9V19" /><path d="M16 5.500H19V8H16Z" fill="#fff" stroke="none" /></svg></TaskItem>
    <Gap $w={3} />
    <TaskItem $state="open">
      <svg width="30" height="30" viewBox="0 0 30 30">
        <defs>
          <linearGradient id="edgeA" x1="0" y1="0" x2="1" y2=".3"><stop offset="0" stopColor="#2aa3df" /><stop offset=".5" stopColor="#36c6c9" /><stop offset="1" stopColor="#68dc5b" /></linearGradient>
          <linearGradient id="edgeB" x1="0" y1="0" x2="0" y2="1"><stop offset="0" stopColor="#1a8fdc" /><stop offset="1" stopColor="#0b4da6" /></linearGradient>
        </defs>
        <path d="M0 13C1 5 7 0 15 0C24 0 30 6 30 13C30 18 26 20.500 22 20.500C18 20.500 16.500 19 18 17C20 13 16 9 11 9C6 9 2 11 0 15Z" fill="url(#edgeA)" />
        <path d="M0 14C2 9 8 7 13 9C8 9.500 6 14 7 18C8 24 15 28 22 28C14 32 0 30 0 14Z" fill="url(#edgeB)" />
        <path d="M13 9C8 13 10 22 19 24C23 25 27 23.500 28.500 22.500C26 27 20 31 14 28.500C7 26 4 14 13 9Z" fill="#1266bb" />
        <path d="M13 9.500C18 9 20 14 17.500 17C16 19 18 21 22 20.700C26 20.500 28.500 19 29 19L28 23C20 27 9 22 13 9.500Z" fill="#1f2c48" opacity=".85" />
      </svg>
    </TaskItem>
    <TaskItem $state="open">
      <svg width="28" height="24" viewBox="0 0 28 24"><path d="M0 2Q0 0 2 0H11L13.500 3H26Q28 3 28 5V22Q28 23.500 26 23.500H2Q0 23.500 0 22Z" fill="#fbd363" /><path d="M0 4V2Q0 0 2 0H11L12.500 2L11 4Z" fill="#df9f15" /><path d="M5 23.500V14Q5 12.500 6.500 12.500H21.500Q23 12.500 23 14V23.500H18.500V18H9.500V23.500Z" fill="#3b93dc" /></svg>
    </TaskItem>
    <TaskItem>
      <svg width="30" height="28" viewBox="0 0 30 28"><path d="M0 9.500L15 0L30 9.500V28H0Z" fill="#1464ac" /><path d="M3 9.500H27V20H3Z" fill="#f3f3f3" /><path d="M0 9.500L15 19L30 9.500V28H0Z" fill="#28a9e6" /><path d="M30 9.500V28H0Z" fill="#49c5f3" opacity=".7" /></svg>
    </TaskItem>
    <TaskItem $state="open">
      <svg width="28" height="28" viewBox="0 0 28 28"><path d="M3 1L26 0V26H2Z" fill="#dfe6f3" /><path d="M3 1L11 .5L10 27L0 26Z" fill="#4668b0" /><path d="M7 5L27 3.500V28L7 26Z" fill="#f4f7fc" /><path d="M21 8H26M21 12H26M21 16H26M11 21H26M11 24H26" stroke="#3d5fa8" strokeWidth="1.500" /><text x="7.500" y="17.500" fontFamily="Liberation Serif, serif" fontWeight="700" fontSize="13" fill="#21428c">W</text></svg>
    </TaskItem>
    <TaskItem>
      <svg width="28" height="26" viewBox="0 0 28 26"><path d="M8 0L25 5L28 18L12 15Z" fill="#4fb2ec" /><path d="M8 0L25 5L26 9L10 8Z" fill="#84cff5" /><path d="M19 17L25 18L24 20L17 19Z" fill="#8e99a5" /><path d="M2 17L22 19L18 21L0 20ZM4 21L19 23L16 26L1 24Z" fill="#c9ced4" /></svg>
    </TaskItem>
    <TaskItem>
      <svg width="28" height="28" viewBox="0 0 28 28"><circle cx="14" cy="14" r="14" fill="#fff" /><path d="M14 14L1.900 7A14 14 0 0 1 26.100 7Z" fill="#e33b2e" /><path d="M14 7H26.100A14 14 0 0 1 14 28L20 17.500Z" fill="#fbc116" /><path d="M1.900 7L8 17.500L14 21L20 17.500L14 28A14 14 0 0 1 1.900 7Z" fill="#2da94f" /><circle cx="14" cy="14" r="6.700" fill="#fff" /><circle cx="14" cy="14" r="5.200" fill="#3c7df0" /></svg>
    </TaskItem>
    <TaskItem $state="many">
      <svg width="30" height="28" viewBox="0 0 30 28"><path d="M0 2L14 0V28L0 26Z" fill="#f2a62b" /><path d="M12 2L24 0V9H12Z" fill="#fdf3d8" /><path d="M5 8H29V26H5Z" fill="#fff3cf" /><path d="M5 8L17 18L29 8" stroke="#e39a20" strokeWidth="1.500" fill="none" /><circle cx="18" cy="17" r="7.500" fill="#f9cf63" stroke="#df9216" strokeWidth="2" /><path d="M14.500 14L18 18L22 14.500" stroke="#8a5a10" strokeWidth="1.500" fill="none" /><circle cx="6.500" cy="10" r="3.500" fill="none" stroke="#fff1cc" strokeWidth="2" /></svg>
    </TaskItem>
    <TaskItem>
      <svg width="28" height="28" viewBox="0 0 28 28" fill="none"><path d="M25 18.500C23 23.500 19 26 14.500 26C8.500 26 3.500 21.500 3.500 15.500C3.500 9.500 8.500 5 14.500 5C21 5 25.500 10 25 17H10C10.500 20.500 16 22 17.500 18.500ZM10.200 12.500H18.500C18 8.500 10.800 8.500 10.200 12.500Z" fill="#52c6f5" fillRule="evenodd" /><path d="M7 25.500C1 29-1 26 2 19C6 9 19-1 25 1.500C28 3 27 7 25.500 9.500" stroke="#f5c92c" strokeWidth="2" /></svg>
    </TaskItem>
    <TaskItem $w={61} $state="active">
      <svg width="28" height="27" viewBox="0 0 28 27"><rect width="28" height="27" rx="5" fill="#b30b00" /><PdfMark c="#fff" x={5.5} y={4.5} k={1.25} w={1.3} /></svg>
    </TaskItem>
  </>
);

const SystemTray = () => (
  <Tray>
    <svg width="28" height="22" viewBox="0 0 28 22"><circle cx="13" cy="8" r="8" fill="#a9c5f2" /><path d="M5 18C-1.500 18-1.500 9 5 8.500C8 4 12 5.500 14 8C19 3 26 6 25 10C29 12 28.500 18 23 18Z" fill="#e3ebf6" /></svg>
    <Weather><span>14°C</span><span>Oblačno</span></Weather>
    <svg width="17" height="10" viewBox="0 0 17 10" fill="none" stroke="#fff" strokeWidth="1.400"><path d="M1 9L8.500 1.500L16 9" /></svg>
    <Gap $w={7} />
    <TrayIcon><svg width="16" height="18" viewBox="0 0 16 18" fill="none" stroke="#fff" strokeWidth="1.300"><rect x="1" y="5" width="9.500" height="8" rx="1.500" /><path d="M11 8L14 6V12L11 10M3 2.500Q7 0 11 2.500M3 15.500Q7 18 11 15.500" /></svg></TrayIcon>
    <TrayIcon><svg width="21" height="15" viewBox="0 0 21 15" fill="none" stroke="#fff" strokeWidth="1.200"><path d="M6 4H18.500V13H5V9" /><path d="M7 5.500H17V11.500H7Z" fill="#fff" stroke="none" /><path d="M19.500 7V10.500M1 3V6Q3 8 5 6V3ZM2 0V3M4 0V3M3 7.500V12" /></svg></TrayIcon>
    <TrayIcon><svg width="21" height="17" viewBox="0 0 21 17" fill="none" stroke="#fff" strokeWidth="1.200"><path d="M5 1.500H20V12.500H4V7M8 15.500H16M12 12.500V15.500M1 1H5V6H1ZM3 6V16" /></svg></TrayIcon>
    <TrayIcon><svg width="21" height="17" viewBox="0 0 21 17" fill="none" stroke="#fff" strokeWidth="1.200"><path d="M1 6H3.500L7.500 2V15L3.500 11H1ZM10 6Q11.500 8.500 10 11" /><path d="M13 3.500Q16 8.500 13 13.500M16.500 1Q21 8.500 16.500 16" stroke="#7b849a" /></svg></TrayIcon>
    <Clock>8:56<br />08.07.2022</Clock>
    <Gap $w={14} />
    <svg width="21" height="21" viewBox="0 0 21 21" fill="none" stroke="#fff" strokeWidth="1.300"><path d="M11 17.500L8.500 19.500L6 17.500H1V1H20V11" /><path d="M17 12Q21 16 17.500 18.500Q14 20.500 12 17.500Q17 18 17 12Z" fill="#fff" strokeWidth=".5" /></svg>
    <DesktopEdge />
  </Tray>
);

export default function App() {
  return (
    <Window>
      <GlobalStyle />
      <TitleBar>
        <svg width="15" height="19" viewBox="0 0 15 19" fill="#fff1f0" stroke="#e3362b" strokeWidth="1.300"><path d="M1 1.500H10.500L14 5V18H1Z" /><PdfMark c="#d9261c" x={1.5} y={4} k={0.85} /></svg>
        <WindowTitle>Objednávka ALIN.pdf - Adobe Acrobat Reader DC (64-bit)</WindowTitle>
        <WindowButton><svg width="12" height="12" viewBox="0 0 12 12" stroke="#000"><path d="M0 5.500H12" /></svg></WindowButton>
        <WindowButton><svg width="12" height="12" viewBox="0 0 12 12" fill="none" stroke="#000"><path d="M.5 2.500H9.500V11.500H.5ZM2.500 2.500V.5H11.500V9.500H9.500" /></svg></WindowButton>
        <WindowButton><svg width="12" height="12" viewBox="0 0 12 12" stroke="#000"><path d="M0 0L12 12M12 0L0 12" /></svg></WindowButton>
      </TitleBar>
      <MenuBar>
        <span>Soubor</span><span>Úpravy</span><span>Zobrazení</span><span>Podepsat</span><span>Okna</span><span>Nápověda</span>
      </MenuBar>
      <TabBar>
        <HomeTabs><span>Domovská stránka</span><span>Nástroje</span></HomeTabs>
        <ActiveTab>
          Objednávka ALIN.pdf
          <svg width="8" height="8" viewBox="0 0 8 8" stroke={ink} strokeWidth="2"><path d="M.5 .5L7.500 7.500M7.500 .5L.5 7.500" /></svg>
        </ActiveTab>
        <SignIn>
          <svg width="27" height="27" viewBox="0 0 27 27" fill="none" stroke={ink} strokeWidth="2.200"><circle cx="13.500" cy="13" r="12.300" /><path d="M10.300 9.300Q11 7 13.500 7Q16.500 7 16.500 9.500Q16.500 11 15 12Q13.500 13 13.500 15.500" /><circle cx="13.500" cy="18.800" r=".6" strokeWidth="1.600" /></svg>
          Přihlásit se
        </SignIn>
      </TabBar>
      <MainToolbar />
      <CommentToolbar />
      <Workspace>
        <SideHandle><HandleArrow /></SideHandle>
        <Canvas><OrderPage /></Canvas>
        <Scrollbar>
          <svg width="11" height="8" viewBox="0 0 11 8" fill="none" stroke="#505050" strokeWidth="2.200"><path d="M1 6.500L5.500 2L10 6.500" /></svg>
          <Thumb />
          <svg width="11" height="8" viewBox="0 0 11 8" fill="none" stroke="#505050" strokeWidth="2.200"><path d="M1 1.500L5.500 6L10 1.500" /></svg>
        </Scrollbar>
        <SideHandle $dir="right"><HandleArrow /></SideHandle>
        <Comments />
        <ToolRail />
      </Workspace>
      <Taskbar>
        <Apps />
        <SystemTray />
      </Taskbar>
    </Window>
  );
}
